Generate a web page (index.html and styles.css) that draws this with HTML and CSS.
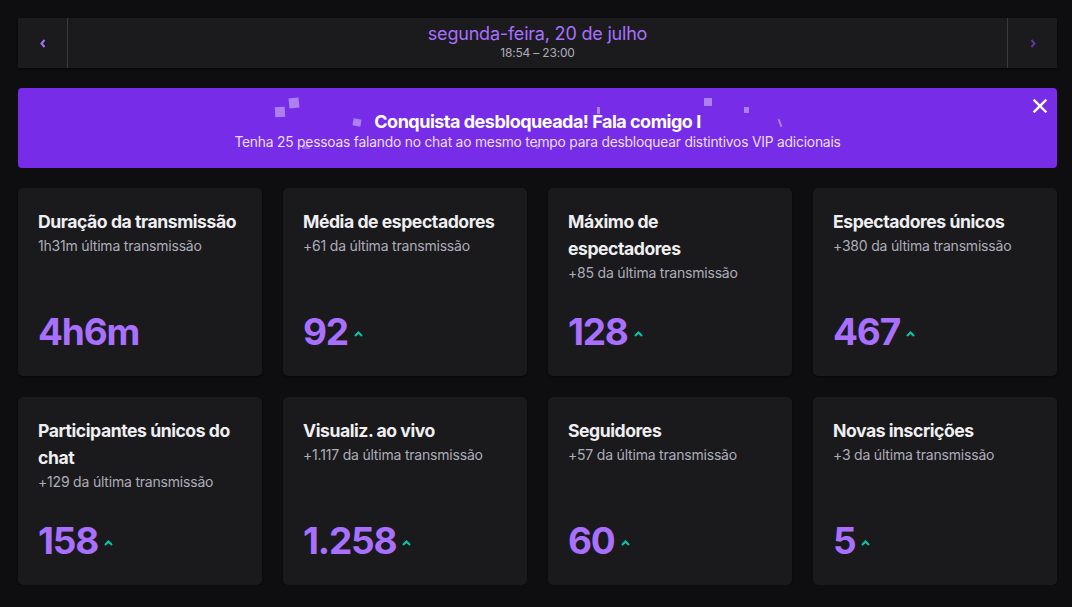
FILE: index.html
```html
<!DOCTYPE html>
<html lang="pt-BR">
<head>
<meta charset="utf-8">
<title>Resumo da transmissão</title>
<link rel="stylesheet" href="styles.css">
</head>
<body>
<main class="page">
  <header class="datebar">
    <button class="nav nav-prev" aria-label="Anterior">
      <svg width="6" height="9" viewBox="0 0 6 9"><path d="M4.5 1 L1.5 4.5 L4.5 8" fill="none" stroke="#a970ff" stroke-width="2"/></svg>
    </button>
    <div class="date">
      <div class="date-title">segunda-feira, 20 de julho</div>
      <div class="date-time">18:54 – 23:00</div>
    </div>
    <button class="nav nav-next" aria-label="Próximo">
      <svg width="6" height="9" viewBox="0 0 6 9"><path d="M1.5 1 L4.5 4.5 L1.5 8" fill="none" stroke="#5c3aa0" stroke-width="2"/></svg>
    </button>
  </header>

  <section class="banner">
    <span class="confetti c1"></span>
    <span class="confetti c2"></span>
    <span class="confetti c3"></span>
    <span class="confetti c4"></span>
    <span class="confetti c5"></span>
    <span class="confetti c6"></span>
    <span class="confetti c7"></span>
    <span class="confetti c8"></span>
    <span class="confetti c9"></span>
    <div class="banner-title">Conquista desbloqueada! Fala comigo I</div>
    <div class="banner-text">Tenha 25 pessoas falando no chat ao mesmo tempo para desbloquear distintivos VIP adicionais</div>
    <button class="close" aria-label="Fechar">
      <svg width="14" height="14" viewBox="0 0 14 14"><path d="M1.5 1.5 L12.5 12.5 M12.5 1.5 L1.5 12.5" stroke="#fff" stroke-width="2.4" stroke-linecap="square"/></svg>
    </button>
  </section>

  <section class="grid">
    <article class="card">
      <div class="card-head">
        <h3 class="card-title">Duração da transmissão</h3>
        <p class="card-sub">1h31m última transmissão</p>
      </div>
      <div class="card-value"><span class="num">4h6m</span></div>
    </article>
    <article class="card">
      <div class="card-head">
        <h3 class="card-title">Média de espectadores</h3>
        <p class="card-sub">+61 da última transmissão</p>
      </div>
      <div class="card-value"><span class="num">92</span><svg class="up" width="9" height="6" viewBox="0 0 9 6"><path d="M1 5 L4.5 1.5 L8 5" fill="none" stroke="#00c8af" stroke-width="2"/></svg></div>
    </article>
    <article class="card">
      <div class="card-head">
        <h3 class="card-title">Máximo de espectadores</h3>
        <p class="card-sub">+85 da última transmissão</p>
      </div>
      <div class="card-value"><span class="num">128</span><svg class="up" width="9" height="6" viewBox="0 0 9 6"><path d="M1 5 L4.5 1.5 L8 5" fill="none" stroke="#00c8af" stroke-width="2"/></svg></div>
    </article>
    <article class="card">
      <div class="card-head">
        <h3 class="card-title">Espectadores únicos</h3>
        <p class="card-sub">+380 da última transmissão</p>
      </div>
      <div class="card-value"><span class="num">467</span><svg class="up" width="9" height="6" viewBox="0 0 9 6"><path d="M1 5 L4.5 1.5 L8 5" fill="none" stroke="#00c8af" stroke-width="2"/></svg></div>
    </article>
    <article class="card">
      <div class="card-head">
        <h3 class="card-title">Participantes únicos do chat</h3>
        <p class="card-sub">+129 da última transmissão</p>
      </div>
      <div class="card-value"><span class="num">158</span><svg class="up" width="9" height="6" viewBox="0 0 9 6"><path d="M1 5 L4.5 1.5 L8 5" fill="none" stroke="#00c8af" stroke-width="2"/></svg></div>
    </article>
    <article class="card">
      <div class="card-head">
        <h3 class="card-title">Visualiz. ao vivo</h3>
        <p class="card-sub">+1.117 da última transmissão</p>
      </div>
      <div class="card-value"><span class="num">1.258</span><svg class="up" width="9" height="6" viewBox="0 0 9 6"><path d="M1 5 L4.5 1.5 L8 5" fill="none" stroke="#00c8af" stroke-width="2"/></svg></div>
    </article>
    <article class="card">
      <div class="card-head">
        <h3 class="card-title">Seguidores</h3>
        <p class="card-sub">+57 da última transmissão</p>
      </div>
      <div class="card-value"><span class="num">60</span><svg class="up" width="9" height="6" viewBox="0 0 9 6"><path d="M1 5 L4.5 1.5 L8 5" fill="none" stroke="#00c8af" stroke-width="2"/></svg></div>
    </article>
    <article class="card">
      <div class="card-head">
        <h3 class="card-title">Novas inscrições</h3>
        <p class="card-sub">+3 da última transmissão</p>
      </div>
      <div class="card-value"><span class="num">5</span><svg class="up" width="9" height="6" viewBox="0 0 9 6"><path d="M1 5 L4.5 1.5 L8 5" fill="none" stroke="#00c8af" stroke-width="2"/></svg></div>
    </article>
  </section>
</main>
</body>
</html>
```

FILE: styles.css
```css
* { box-sizing: border-box; }

html, body {
  margin: 0;
  background: #0e0e10;
}

body {
  font-family: Inter, "Noto Sans", "Liberation Sans", sans-serif;
  color: #efeff1;
}

.page {
  width: 1039px;
  padding: 18px 0 0 0;
  margin-left: 18px;
  display: flex;
  flex-direction: column;
  gap: 20px;
}

.datebar {
  height: 50px;
  display: flex;
  align-items: stretch;
  background: #1b1b1e;
  box-shadow: 0 1px 2px rgba(0, 0, 0, 0.6);
}

.nav {
  width: 50px;
  flex: none;
  background: transparent;
  border: 0;
  padding: 0;
  display: flex;
  align-items: center;
  justify-content: center;
  cursor: pointer;
}

.nav-prev { border-right: 1px solid #3a3a3d; padding-left: 1px; }
.nav-next { border-left: 1px solid #3a3a3d; }

.date {
  flex: 1;
  display: flex;
  flex-direction: column;
  align-items: center;
  justify-content: center;
  padding-bottom: 3px;
}

.date-title {
  color: #a970ff;
  font-size: 18px;
  line-height: 22px;
  letter-spacing: -0.2px;
}

.date-time {
  color: #adadb8;
  font-size: 12px;
  line-height: 15px;
  letter-spacing: -0.2px;
}

.banner {
  position: relative;
  height: 80px;
  background: #772ce8;
  border-radius: 4px;
  display: flex;
  flex-direction: column;
  align-items: center;
  justify-content: center;
  overflow: hidden;
  padding-top: 6px;
}

.banner-title {
  font-size: 18px;
  font-weight: 700;
  line-height: 22px;
  color: #ffffff;
  letter-spacing: -0.5px;
}

.banner-text {
  font-size: 13.8px;
  line-height: 18px;
  color: #eadffc;
  letter-spacing: -0.2px;
}

.close {
  position: absolute;
  top: 7px;
  right: 6px;
  width: 22px;
  height: 22px;
  border: 0;
  padding: 0;
  background: transparent;
  display: flex;
  align-items: center;
  justify-content: center;
}

.confetti {
  position: absolute;
  background: rgba(255, 255, 255, 0.4);
}
.c1 { left: 257px; top: 19px; width: 10px; height: 10px; transform: rotate(-4deg); }
.c2 { left: 271px; top: 10px; width: 10px; height: 10px; transform: rotate(-6deg); }
.c3 { left: 335px; top: 31px; width: 8px; height: 7px; transform: rotate(10deg); }
.c4 { left: 284px; top: 57px; width: 8px; height: 4px; background: rgba(255,255,255,0.25); }
.c5 { left: 686px; top: 10px; width: 8px; height: 8px; }
.c6 { left: 726px; top: 19px; width: 5px; height: 6px; }
.c7 { left: 579px; top: 19px; width: 3px; height: 7px; }
.c8 { left: 761px; top: 31px; width: 2px; height: 8px; transform: rotate(-20deg); }
.c9 { left: 518px; top: 56px; width: 3px; height: 5px; background: rgba(255,255,255,0.25); }

.grid {
  display: grid;
  grid-template-columns: repeat(4, 244px);
  grid-auto-rows: 188px;
  gap: 21px;
}

.card {
  background: #1a1a1d;
  border-radius: 5px;
  box-shadow: 0 1px 2px rgba(0, 0, 0, 0.5);
  padding: 20px 18px 22px 20px;
  display: flex;
  flex-direction: column;
  justify-content: space-between;
}

.card-title {
  margin: 0;
  font-size: 17.6px;
  font-weight: 700;
  line-height: 27px;
  color: #efeff1;
  letter-spacing: -0.45px;
}

.card-sub {
  margin: 2px 0 0 0;
  font-size: 14px;
  line-height: 18px;
  color: #adadb8;
  letter-spacing: -0.2px;
}

.card-value {
  display: flex;
  align-items: center;
  gap: 6px;
  height: 44px;
}

.num {
  font-size: 37px;
  font-weight: 700;
  line-height: 44px;
  color: #a970ff;
  letter-spacing: -1.2px;
}

.up {
  margin-top: 3px;
}
```
